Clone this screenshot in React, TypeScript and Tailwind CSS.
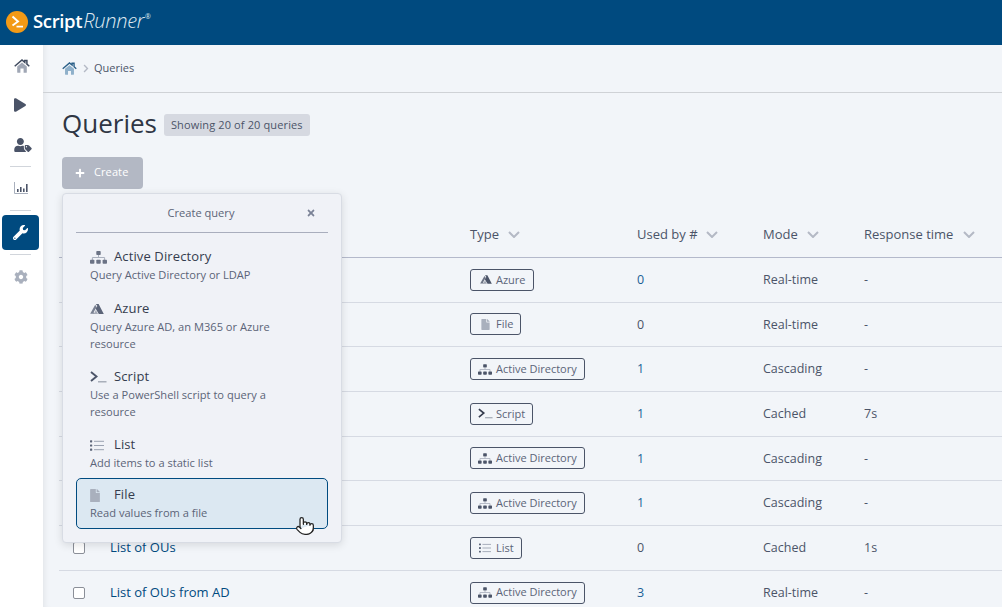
import React from "react";
import { FaPlay, FaUserTag, FaWrench, FaCog, FaChevronRight, FaPlus, FaTimes, FaFile } from "react-icons/fa";
import { Pointer } from "lucide-react";

const Home = ({ c = "", roof, body }: { c?: string; roof: string; body: string }) => (
  <svg viewBox="0 0 16 14" className={c}>
    <path d="M3.2 7.4 L8 3.4 L12.8 7.4 V13.2 a0.5 0.5 0 0 1 -0.5 0.5 H9.6 V9.6 H6.4 V13.7 H3.7 a0.5 0.5 0 0 1 -0.5 -0.5Z" fill={body} />
    <path d="M0.7 7.2 L8 1 L10.8 3.3 V1.4 H12.9 V5.1 L15.3 7.2" fill="none" stroke={roof} strokeWidth="1.5" />
  </svg>
);

const Sitemap = ({ c = "" }: { c?: string }) => (
  <svg viewBox="0 0 17 13" className={c}>
    <rect x="6.3" y="0" width="4.4" height="4" rx="0.8" fill="currentColor" />
    <path d="M8.5 4V6.5M2.4 9V6.5H14.6V9" stroke="#a9b0bd" strokeWidth="1" fill="none" />
    <rect x="0" y="8.8" width="4.4" height="4" rx="0.8" fill="currentColor" />
    <rect x="6.3" y="8.8" width="4.4" height="4" rx="0.8" fill="currentColor" />
    <rect x="12.6" y="8.8" width="4.4" height="4" rx="0.8" fill="currentColor" />
  </svg>
);

const Azure = ({ c = "" }: { c?: string }) => (
  <svg viewBox="0 0 14 10" className={c}>
    <path d="M5.8 0 L8.6 0 L13.8 10 L8.8 10 L5.6 4.6 L7.4 2Z" fill="currentColor" />
    <path d="M5.2 0.8 L0.2 9.8 L4.4 9.8 L3.6 8.2 L6.6 3Z" fill="currentColor" opacity="0.8" />
    <path d="M5.8 6 L8 10 L3.8 10Z" fill="currentColor" opacity="0.5" />
  </svg>
);

const Terminal = ({ c = "" }: { c?: string }) => (
  <svg viewBox="0 0 17 12" className={c} fill="none">
    <path d="M1 1 L6.5 5.5 L1 10" stroke="currentColor" strokeWidth="1.9" />
    <path d="M8 10.8 H16.5" stroke="#9ca3af" strokeWidth="1.3" />
  </svg>
);

const ListIcon = ({ c = "" }: { c?: string }) => (
  <svg viewBox="0 0 14 11" className={c}>
    <rect x="0" y="0.2" width="2.2" height="2.2" rx="0.6" fill="#5b6478" />
    <rect x="0" y="4.4" width="2.2" height="2.2" rx="0.6" fill="#5b6478" />
    <rect x="0" y="8.6" width="2.2" height="2.2" rx="0.6" fill="#5b6478" />
    <path d="M4 1.3H14M4 5.5H14M4 9.7H14" stroke="#9aa2b1" strokeWidth="1" />
  </svg>
);

const Badge = ({ kind }: { kind: string }) => {
  const icon: Record<string, React.ReactNode> = {
    Azure: <Azure c="w-[12px] h-[9px] ml-[2px] text-[#4b5468]" />,
    File: <FaFile className="w-[9px] h-[11px] text-[#a9b0bd] ml-[3px]" />,
    "Active Directory": <Sitemap c="w-[14px] h-[11px] text-[#4b5468]" />,
    Script: <Terminal c="w-[15px] h-[11px] text-[#353c4e]" />,
    List: <ListIcon c="w-[12px] h-[10px] ml-[1px]" />,
  };
  return (
    <span className="inline-flex items-center h-[22px] pl-[7px] pr-[7px] border border-[#4b5468] rounded-[3px] text-[11px] text-[#5b6478]">
      <span className="w-[18px] flex items-center">{icon[kind]}</span>
      <span>{kind}</span>
    </span>
  );
};

const rows = [
  { name: "", type: "Azure", used: "0", link: true, mode: "Real-time", time: "-" },
  { name: "", type: "File", used: "0", link: false, mode: "Real-time", time: "-" },
  { name: "", type: "Active Directory", used: "1", link: true, mode: "Cascading", time: "-" },
  { name: "", type: "Script", used: "1", link: true, mode: "Cached", time: "7s" },
  { name: "", type: "Active Directory", used: "1", link: true, mode: "Cascading", time: "-" },
  { name: "", type: "Active Directory", used: "1", link: true, mode: "Cascading", time: "-" },
  { name: "List of OUs", type: "List", used: "0", link: false, mode: "Cached", time: "1s" },
  { name: "List of OUs from AD", type: "Active Directory", used: "3", link: true, mode: "Real-time", time: "-" },
];

const HeadCell = ({ label, w }: { label: string; w: string }) => (
  <div className={`${w} shrink-0 flex items-center text-[13px] text-[#4b5468]`}>
    <span>{label}</span>
    <svg viewBox="0 0 12 7" className="w-[12px] h-[7px]" fill="none">
      <path d="M1 1 L6 6 L11 1" stroke="#b4b9c5" strokeWidth="2" />
    </svg>
  </div>
);

const MenuItem = ({ icon, title, desc, active = false, pad }: { icon: React.ReactNode; title: string; desc: string; active?: boolean; pad: string }) => (
  <div className={`${pad} pl-[13px] pr-[8px] rounded-[5px] ${active ? "bg-[#dce8f2] border border-[#004b80]" : "border border-transparent"}`}>
    <div className="flex items-center h-[18px]">
      <span className="w-[24px] flex items-center">{icon}</span>
      <span className="text-[13px] tracking-[0.12px] text-[#353c4e] font-medium">{title}</span>
    </div>
    <div className="text-[11.1px] leading-[17px] max-w-[210px] text-[#5b6478]">{desc}</div>
  </div>
);

export default function App() {
  return (
    <div className="w-[1002px] h-[607px] overflow-hidden flex flex-col bg-white" style={{ fontFamily: '"Open Sans", "Noto Sans", sans-serif' }}>
      <header className="h-[45px] shrink-0 bg-[#004a7f] flex items-center pl-[6px] pb-[3px]">
        <svg viewBox="0 0 22 22" className="w-[22px] h-[22px] mt-[1px]">
          <circle cx="11" cy="11" r="11" fill="#f39a16" />
          <path d="M6.5 5.5 L12 10.5 L6.5 14.5" stroke="#fff" strokeWidth="1.9" fill="none" />
          <path d="M10.5 15.6 H17" stroke="#fff" strokeWidth="1.7" />
        </svg>
        <span className="ml-[5px] text-[18.5px] leading-none text-white font-semibold tracking-[-0.35px]">Script</span>
        <span className="ml-[1px] text-[20px] leading-none text-[#dfe8f0] italic font-light tracking-[-0.3px]">Runner</span>
        <span className="text-[7px] text-[#dfe8f0] self-start mt-[12px] ml-[1px]">®</span>
      </header>
      <div className="flex-1 flex min-h-0">
        <aside className="w-[43px] shrink-0 bg-white flex flex-col items-start">
          <Home c="ml-[14px] mt-[14px] w-[16px] h-[14px]" roof="#3f4a5e" body="#a0a7b5" />
          <FaPlay className="ml-[14px] mt-[25px] w-[12px] h-[14px] text-[#4b5468]" />
          <FaUserTag className="ml-[14px] mt-[26px] w-[18px] h-[14px] text-[#4b5468]" />
          <div className="ml-[10px] mt-[14px] w-[21px] h-px bg-[#d1d5db]" />
          <svg viewBox="0 0 14 12" className="ml-[14px] mt-[15px] w-[14px] h-[12px]">
            <path d="M0.5 0V11.5H14" stroke="#a9b0bd" fill="none" />
            <path d="M3 7h1.6v3H3zM6 5h1.6v5H6zM9 6.5h1.6V10H9zM12 2h1.6v8H12z" fill="#4b5468" />
          </svg>
          <div className="ml-[10px] mt-[16px] w-[21px] h-px bg-[#d1d5db]" />
          <div className="ml-[2px] mt-[4px] w-[37px] h-[35px] rounded-[4px] bg-[#004a7f] flex items-center justify-center">
            <FaWrench className="w-[15px] h-[15px] text-white" />
          </div>
          <div className="ml-[10px] mt-[4px] w-[21px] h-px bg-[#d1d5db]" />
          <FaCog className="ml-[14px] mt-[15px] w-[14px] h-[14px] text-[#a9b0bd]" />
        </aside>
        <main className="relative flex-1 min-w-0 bg-[#f2f5f9] shadow-[inset_6px_0_6px_-5px_rgba(0,0,0,0.08)]">
          <div className="h-[48px] flex items-center pl-[19px] border-b border-[#cfd2d6]">
            <Home c="w-[15px] h-[13px]" roof="#2a5f88" body="#8fb0ca" />
            <FaChevronRight className="ml-[6px] w-[6px] h-[9px] text-[#b4b9c5]" />
            <span className="ml-[5px] text-[11px] text-[#4b5468]">Queries</span>
          </div>
          <div className="pl-[19px] pt-[17px] flex items-start h-[60px]">
            <h1 className="text-[26px] leading-[26px] text-[#2f3644] font-normal">Queries</h1>
            <span className="ml-[7px] mt-[4px] h-[22px] px-[7px] flex items-center rounded-[3px] bg-[#d6d9e1] text-[11px] tracking-[0.13px] text-[#4b5468]">Showing 20 of 20 queries</span>
          </div>
          <div className="pl-[19px] mt-[4px]">
            <button className="w-[81px] h-[32px] rounded-[4px] bg-[#b3b8c4] flex items-center pl-[13px] pb-[1px] text-[11px] tracking-[0.1px] text-white">
              <FaPlus className="w-[10px] h-[10px]" />
              <span className="ml-[9px]">Create</span>
            </button>
          </div>
          <div className="ml-[16px] mt-[21px]">
            <div className="flex items-center h-[48px] pt-[2px] border-b border-[#b4b9cb]">
              <div className="w-[411px] shrink-0" />
              <HeadCell label="Type" w="w-[167px] gap-[9px]" />
              <HeadCell label="Used by #" w="w-[126px] gap-[8px]" />
              <HeadCell label="Mode" w="w-[101px] gap-[9px]" />
              <HeadCell label="Response time" w="w-[138px] gap-[10px]" />
            </div>
            {rows.map((r, i) => (
              <div key={i} className="flex items-center h-[44.7px] border-b border-[#d6dae3] text-[12.5px] text-[#4b5468]">
                <div className="w-[51px] shrink-0 pl-[14px]">
                  <div className="w-[12px] h-[12px] rounded-[2px] border border-[#8b8f98] bg-white" />
                </div>
                <div className="w-[360px] shrink-0 text-[13px] text-[#004a7f] font-medium">{r.name}</div>
                <div className="w-[167px] shrink-0"><Badge kind={r.type} /></div>
                <div className={`w-[126px] shrink-0 pt-[1px] ${r.link ? "text-[#1a5f96]" : ""}`}>{r.used}</div>
                <div className="w-[101px] shrink-0 pt-[1px]">{r.mode}</div>
                <div className="shrink-0 pt-[1px]">{r.time}</div>
              </div>
            ))}
          </div>

          <div className="absolute left-[19px] top-[148px] w-[280px] h-[350px] rounded-[4px] border border-[#d8dce4] bg-[#f0f2f7] shadow-[0_2px_8px_rgba(0,0,0,0.12)] px-[13px]">
            <div className="h-[39px] flex items-center justify-center relative border-b border-[#a9aebd] text-[11.1px] text-[#5b6478] pr-[2px]">
              Create query
              <FaTimes className="absolute right-[12px] top-[14px] w-[10px] h-[10px] text-[#7a8296]" />
            </div>
            <MenuItem pad="pt-[14px] h-[52px]" icon={<Sitemap c="w-[17px] h-[13px] text-[#6b7385]" />} title="Active Directory" desc="Query Active Directory or LDAP" />
            <MenuItem pad="pt-[14px] h-[68px]" icon={<Azure c="w-[14px] h-[10px] text-[#5b6478]" />} title="Azure" desc="Query Azure AD, an M365 or Azure resource" />
            <MenuItem pad="pt-[14px] h-[68px]" icon={<Terminal c="w-[17px] h-[12px] text-[#4b5468]" />} title="Script" desc="Use a PowerShell script to query a resource" />
            <MenuItem pad="pt-[14px] h-[57px]" icon={<ListIcon c="w-[14px] h-[11px]" />} title="List" desc="Add items to a static list" />
            <MenuItem active pad="pt-[7px] h-[51px]" icon={<FaFile className="w-[10px] h-[13px] text-[#a9b0bd]" />} title="File" desc="Read values from a file" />
          </div>
          <Pointer className="absolute left-[252px] top-[468px] w-[20px] h-[26px] text-[#222] fill-white" strokeWidth={1.5} />
        </main>
      </div>
    </div>
  );
}
